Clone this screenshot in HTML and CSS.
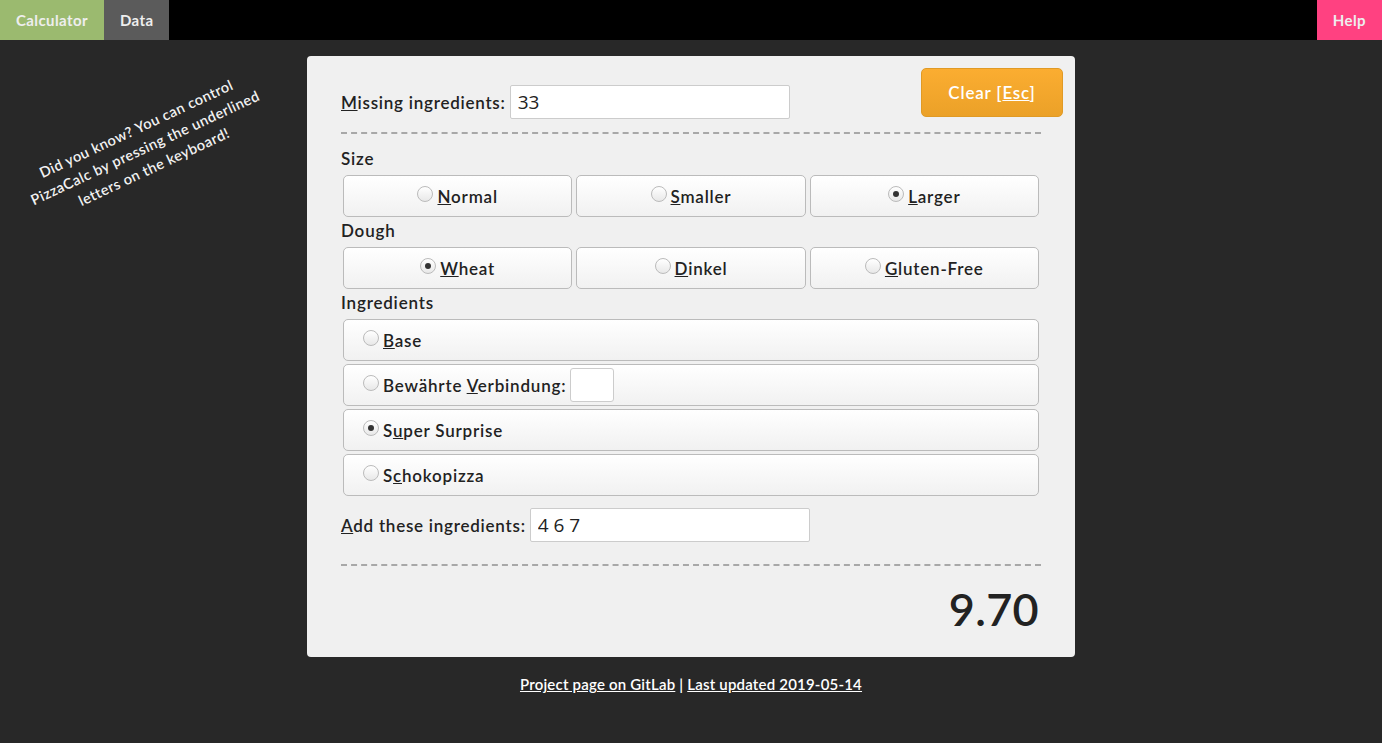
FILE: index.html
```html
<!DOCTYPE html>
<html>
  <head>
    <title>PizzaCalc</title>
    <link rel="stylesheet" href="styles.css">
  </head>
  <body>
    <nav class="topbar">
      <a class="tab tab-calc">Calculator</a>
      <a class="tab tab-data">Data</a>
      <span class="spacer"></span>
      <a class="tab tab-help">Help</a>
    </nav>

    <div class="hint">
      Did you know? You can control<br>
      PizzaCalc by pressing the underlined<br>
      letters on the keyboard!
    </div>

    <main class="page">
      <div class="card">
        <div class="top-row">
          <div class="field">
            <label><u>M</u>issing ingredients:</label>
            <input class="text-input" type="text" value="33">
          </div>
          <button class="clear-btn">Clear [<u>Esc</u>]</button>
        </div>

        <hr class="dashed">

        <div class="section-label">Size</div>
        <div class="choices">
          <div class="choice"><span class="radio"></span><span><u>N</u>ormal</span></div>
          <div class="choice"><span class="radio"></span><span><u>S</u>maller</span></div>
          <div class="choice"><span class="radio checked"></span><span><u>L</u>arger</span></div>
        </div>

        <div class="section-label">Dough</div>
        <div class="choices">
          <div class="choice"><span class="radio checked"></span><span><u>W</u>heat</span></div>
          <div class="choice"><span class="radio"></span><span><u>D</u>inkel</span></div>
          <div class="choice"><span class="radio"></span><span><u>G</u>luten-Free</span></div>
        </div>

        <div class="section-label">Ingredients</div>
        <div class="rows">
          <div class="row"><span class="radio"></span><span><u>B</u>ase</span></div>
          <div class="row">
            <span class="radio"></span><span>Bewährte <u>V</u>erbindung:</span>
            <input class="small-input" type="text">
          </div>
          <div class="row"><span class="radio checked"></span><span>S<u>u</u>per Surprise</span></div>
          <div class="row"><span class="radio"></span><span>S<u>c</u>hokopizza</span></div>
        </div>

        <div class="field add-field">
          <label><u>A</u>dd these ingredients:</label>
          <input class="text-input" type="text" value="4 6 7">
        </div>

        <hr class="dashed bottom">

        <div class="result">9.70</div>
      </div>

      <footer class="footer">
        <a>Project page on GitLab</a> | <a>Last updated 2019-05-14</a>
      </footer>
    </main>
  </body>
</html>
```

FILE: styles.css
```css
body,
html {
  margin: 0;
  padding: 0;
}

body {
  background: #282828;
  font-family: Lato, 'Open Sans', sans-serif;
  color: #222;
}

.topbar {
  display: flex;
  height: 40px;
  background: #000;
}

.tab {
  display: flex;
  align-items: center;
  padding: 0 16px;
  color: #eee;
  font-size: 15px;
  font-weight: bold;
  letter-spacing: 0.4px;
}

.tab-calc {
  background: #9bba6f;
}

.tab-data {
  background: #5b5b5b;
}

.tab-help {
  background: #ff4181;
}

.spacer {
  flex: 1;
}

.hint {
  position: absolute;
  left: 12px;
  top: 116px;
  width: 266px;
  color: #f2f2f2;
  font-size: 14.5px;
  font-weight: 600;
  letter-spacing: 0.5px;
  line-height: 21px;
  text-align: center;
  transform: rotate(-25deg);
}

.page {
  display: flex;
  flex-direction: column;
  align-items: center;
  padding-top: 16px;
}

.card {
  width: 768px;
  box-sizing: border-box;
  background: #f0f0f0;
  border-radius: 4px;
  padding: 12px 34px 23px 34px;
}

.top-row {
  display: flex;
  justify-content: space-between;
  align-items: flex-start;
}

.top-row .field {
  margin-top: 17px;
}

.field {
  display: flex;
  align-items: center;
  gap: 4px;
  font-size: 17px;
  font-weight: 600;
  letter-spacing: 0.75px;
}

.text-input {
  width: 280px;
  height: 34px;
  box-sizing: border-box;
  border: 1px solid #ccc;
  border-radius: 2px;
  background: #fff;
  padding: 0 7px;
  font-family: 'Open Sans', sans-serif;
  font-size: 19px;
  letter-spacing: 0;
  color: #222;
}

.clear-btn {
  width: 142px;
  height: 49px;
  margin-right: -22px;
  border: 1px solid #e09a25;
  border-radius: 5px;
  background: linear-gradient(#fbad31, #eba128);
  color: #fff;
  font-family: Lato, 'Open Sans', sans-serif;
  font-size: 17px;
  font-weight: 600;
  letter-spacing: 0.8px;
}

.dashed {
  border: none;
  border-top: 2px dashed #a8a8a8;
  margin: 13px 0;
  height: 0;
}

.dashed.bottom {
  margin: 22px 0 0 0;
}

.section-label {
  height: 24px;
  line-height: 24px;
  margin-top: 2px;
  font-size: 17px;
  font-weight: 600;
  letter-spacing: 0.8px;
}

.dashed + .section-label {
  margin-top: 0;
}

.choices {
  display: grid;
  grid-template-columns: 1fr 1fr 1fr;
  gap: 4px;
  margin: 4px 2px 0 2px;
}

.choice,
.row {
  display: flex;
  align-items: center;
  height: 42px;
  box-sizing: border-box;
  border: 1px solid #bbb;
  border-radius: 5px;
  background: linear-gradient(#fff, #f1f1f1);
  font-size: 17px;
  font-weight: 600;
  letter-spacing: 0.8px;
  gap: 4px;
}

.choice {
  justify-content: center;
}

.rows {
  display: flex;
  flex-direction: column;
  gap: 3px;
  margin: 4px 2px 0 2px;
}

.row {
  padding-left: 19px;
}

.radio {
  width: 16px;
  height: 16px;
  box-sizing: border-box;
  border: 1px solid #bbb;
  border-radius: 50%;
  background: linear-gradient(#fff, #e8e8e8);
  display: flex;
  align-items: center;
  justify-content: center;
  margin-top: -4px;
  flex-shrink: 0;
}

.radio.checked::after {
  content: '';
  width: 6px;
  height: 6px;
  border-radius: 50%;
  background: #333;
}

.small-input {
  width: 44px;
  height: 34px;
  box-sizing: border-box;
  border: 1px solid #ccc;
  border-radius: 3px;
  background: #fff;
}

.add-field {
  margin-top: 12px;
}

.result {
  margin-top: 18px;
  height: 50px;
  line-height: 50px;
  text-align: right;
  font-size: 45px;
  font-weight: 600;
  letter-spacing: 0.3px;
  padding-right: 2px;
}

.footer {
  margin-top: 17px;
  color: #fff;
  font-size: 15px;
  font-weight: 600;
  letter-spacing: 0.2px;
  line-height: 20px;
}

.footer a {
  text-decoration: underline;
}
```
